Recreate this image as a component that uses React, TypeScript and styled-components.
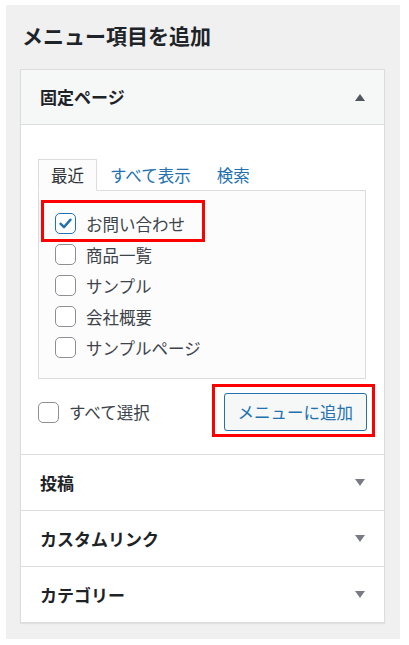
import React, { useState } from 'react'
import styled, { createGlobalStyle } from 'styled-components'

const GlobalStyle = createGlobalStyle`
  html, body {
    margin: 0;
    padding: 0;
    background: #ffffff;
  }
  body {
    font-family: "Noto Sans CJK JP", "Noto Sans", sans-serif;
    color: #3c434a;
  }
`

const Page = styled.div`
  margin: 5px 9px 5px 6px;
  padding: 16px 15px 16px 14px;
  background: #f0f0f1;
`

const Title = styled.h2`
  margin: 0 0 19px 2px;
  font-size: 21px;
  line-height: 29px;
  font-weight: 700;
  color: #1d2327;
`

const Accordion = styled.div`
  background: #ffffff;
  border: 1px solid #dcdcde;
  box-shadow: 0 1px 1px rgba(0, 0, 0, 0.06);
`

const Section = styled.div`
  & + & {
    border-top: 1px solid #dcdcde;
  }
`

const SectionHeader = styled.div<{ $open?: boolean }>`
  display: flex;
  align-items: center;
  justify-content: space-between;
  height: 55px;
  box-sizing: border-box;
  padding: 0 19px;
  background: ${p => (p.$open ? '#f6f7f7' : '#ffffff')};
  border-bottom: ${p => (p.$open ? '1px solid #dcdcde' : 'none')};
  font-size: 17px;
  line-height: 24px;
  font-weight: 700;
  color: #1d2327;
`

const Arrow = styled.svg<{ $open?: boolean }>`
  width: 10px;
  height: 7px;
  fill: ${p => (p.$open ? '#50575e' : '#787c82')};
`

const SectionBody = styled.div`
  padding: 34px 18px 23px 17px;
`

const Tabs = styled.div`
  display: flex;
  align-items: flex-end;
`

const Tab = styled.div<{ $active?: boolean }>`
  position: relative;
  z-index: 1;
  box-sizing: border-box;
  height: 32px;
  padding: 0 12px;
  margin-bottom: -1px;
  display: flex;
  align-items: center;
  font-size: 16.5px;
  line-height: 22px;
  border: 1px solid ${p => (p.$active ? '#dcdcde' : 'transparent')};
  border-bottom: 1px solid ${p => (p.$active ? '#fcfcfc' : 'transparent')};
  background: ${p => (p.$active ? '#fcfcfc' : 'transparent')};
  color: ${p => (p.$active ? '#2c3338' : '#2271b1')};
`

const TabPanel = styled.div`
  border: 1px solid #dcdcde;
  background: #fcfcfc;
  padding: 17px 16px 15px;
`

const Item = styled.label<{ $marked?: boolean }>`
  position: relative;
  display: flex;
  align-items: center;
  width: max-content;
  height: 31px;
  gap: 10px;
  font-size: 16.5px;
  line-height: 22px;
  color: #3c434a;

  ${p =>
    p.$marked &&
    `
    &::after {
      content: '';
      position: absolute;
      top: -8px;
      bottom: -3px;
      left: -14px;
      right: -20px;
      border: 3px solid #ff0000;
    }
  `}
`

const Box = styled.span<{ $checked?: boolean }>`
  box-sizing: border-box;
  width: 21px;
  height: 21px;
  border-radius: 5px;
  border: 1.5px solid ${p => (p.$checked ? '#2271b1' : '#8c8f94')};
  background: #ffffff;
  display: flex;
  align-items: center;
  justify-content: center;
`

const Footer = styled.div`
  margin-top: 14px;
  height: 38px;
  display: flex;
  align-items: center;
  justify-content: space-between;
`

const SelectAll = styled.label`
  display: flex;
  align-items: center;
  gap: 10px;
  font-size: 16.5px;
  line-height: 22px;
  color: #3c434a;
`

const AddButtonWrap = styled.div`
  position: relative;
  display: flex;
  margin-right: -1px;

  &::after {
    content: '';
    position: absolute;
    top: -9px;
    bottom: -6px;
    left: -12px;
    right: -8px;
    border: 3px solid #ff0000;
    pointer-events: none;
  }
`

const AddButton = styled.button`
  box-sizing: border-box;
  height: 38px;
  padding: 0 13px;
  border: 1px solid #2271b1;
  border-radius: 3px;
  background: #f6f7f7;
  color: #2271b1;
  font-family: "Noto Sans CJK JP", "Noto Sans", sans-serif;
  font-size: 16.5px;
  line-height: 22px;
  cursor: pointer;
`

function Checkbox({ checked }: { checked?: boolean }) {
  return (
    <Box $checked={checked}>
      {checked && (
        <svg width="15" height="15" viewBox="0 0 14 14">
          <path d="M2.3 7.2 L5.6 10.4 L11.7 3.4" fill="none" stroke="#2271b1" strokeWidth="2.2" strokeLinecap="round" strokeLinejoin="round" />
        </svg>
      )}
    </Box>
  )
}

function Chevron({ open }: { open?: boolean }) {
  return (
    <Arrow $open={open} viewBox="0 0 10 7">
      {open ? <polygon points="5,0 10,7 0,7" /> : <polygon points="0,0 10,0 5,7" />}
    </Arrow>
  )
}

const pages = ['お問い合わせ', '商品一覧', 'サンプル', '会社概要', 'サンプルページ']

function App() {
  const [tab] = useState(0)

  return (
    <>
      <GlobalStyle />
      <Page>
        <Title>メニュー項目を追加</Title>
        <Accordion>
          <Section>
            <SectionHeader $open>
              固定ページ
              <Chevron open />
            </SectionHeader>
            <SectionBody>
              <Tabs>
                {['最近', 'すべて表示', '検索'].map((t, i) => (
                  <Tab key={t} $active={i === tab}>{t}</Tab>
                ))}
              </Tabs>
              <TabPanel>
                {pages.map((p, i) => (
                  <Item key={p} $marked={i === 0}>
                    <Checkbox checked={i === 0} />
                    {p}
                  </Item>
                ))}
              </TabPanel>
              <Footer>
                <SelectAll>
                  <Checkbox />
                  すべて選択
                </SelectAll>
                <AddButtonWrap>
                  <AddButton>メニューに追加</AddButton>
                </AddButtonWrap>
              </Footer>
            </SectionBody>
          </Section>
          {['投稿', 'カスタムリンク', 'カテゴリー'].map(s => (
            <Section key={s}>
              <SectionHeader>
                {s}
                <Chevron />
              </SectionHeader>
            </Section>
          ))}
        </Accordion>
      </Page>
    </>
  )
}

export default App
